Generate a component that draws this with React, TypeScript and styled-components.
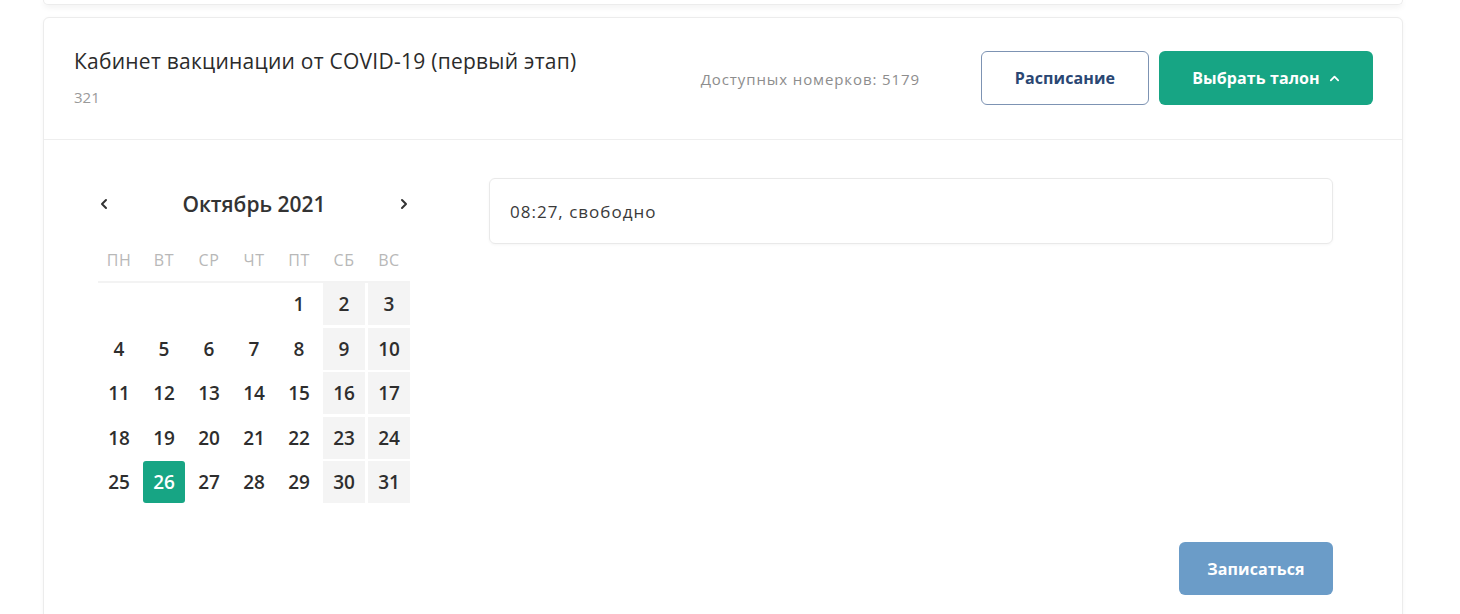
import React from "react";
import styled, { createGlobalStyle } from "styled-components";

const GlobalStyle = createGlobalStyle`
  html, body {
    margin: 0;
    padding: 0;
    background: #ffffff;
    font-family: "Open Sans", "Noto Sans", sans-serif;
    color: #333;
  }
  * { box-sizing: border-box; }
`;

// --- page ---
const Page = styled.div`
  width: 1460px;
  height: 614px;
  overflow: hidden;
  padding: 0 57px 0 43px;
`;

const PrevCard = styled.div`
  height: 5px;
  background: #fff;
  border: 1px solid #ececec;
  border-top: none;
  border-radius: 0 0 6px 6px;
  box-shadow: 0 2px 6px rgba(0, 0, 0, 0.07);
  margin-bottom: 12px;
`;

const Card = styled.section`
  border: 1px solid #ececec;
  border-radius: 6px;
  background: #fff;
  box-shadow: 0 1px 4px rgba(0, 0, 0, 0.04);
`;

// --- header ---
const Header = styled.header`
  height: 122px;
  display: flex;
  align-items: center;
  padding: 0 29px 0 30px;
  border-bottom: 1px solid #eeeeee;
`;

const TitleBlock = styled.div`
  flex: 1;
  display: flex;
  flex-direction: column;
  gap: 14px;
  margin-top: -4px;
`;

const Title = styled.h2`
  margin: 0;
  font-size: 21px;
  font-weight: 400;
  color: #2b2b2b;
  line-height: 26px;
  letter-spacing: 0.25px;
`;

const Sub = styled.span`
  font-size: 15px;
  color: #9a9a9a;
  line-height: 18px;
`;

const Counter = styled.span`
  font-size: 15px;
  color: #8d8d8d;
  letter-spacing: 0.9px;
  margin-right: 61px;
  margin-top: 0;
`;

const Button = styled.button<{ $variant: "outline" | "green" | "blue" }>`
  height: 54px;
  border-radius: 6px;
  font-family: inherit;
  font-size: 16px;
  font-weight: 700;
  letter-spacing: 0.1px;
  display: inline-flex;
  align-items: center;
  justify-content: center;
  gap: 9px;
  cursor: pointer;
  border: ${(p) => (p.$variant === "outline" ? "1.5px solid #7d93b3" : "none")};
  background: ${(p) =>
    p.$variant === "outline" ? "#fff" : p.$variant === "green" ? "#17a584" : "#6b9cc8"};
  color: ${(p) => (p.$variant === "outline" ? "#2a4773" : "#fff")};
`;

const Buttons = styled.div`
  display: flex;
  gap: 10px;
  margin-top: -1px;
`;

// --- body ---
const Body = styled.div`
  display: flex;
  padding: 38px 69px 25px 54px;
  gap: 79px;
  height: 480px;
`;

const Calendar = styled.div`
  width: 312px;
  flex-shrink: 0;
`;

const MonthBar = styled.div`
  height: 52px;
  display: flex;
  align-items: center;
  justify-content: space-between;
`;

const NavBtn = styled.span<{ $side: "left" | "right" }>`
  width: 16px;
  display: flex;
  justify-content: ${(p) => (p.$side === "left" ? "flex-start" : "flex-end")};
  align-items: center;
`;

const Month = styled.span`
  font-size: 21px;
  font-weight: 600;
  color: #333;
`;

const WeekRow = styled.div`
  display: grid;
  grid-template-columns: repeat(7, 42px);
  column-gap: 3px;
  height: 44px;
  align-items: center;
  border-bottom: 2px solid #f3f3f3;
  margin-top: 9px;
`;

const WeekDay = styled.span`
  text-align: center;
  font-size: 16px;
  letter-spacing: 0.6px;
  color: #b8b8b8;
`;

const Days = styled.div`
  display: grid;
  grid-template-columns: repeat(7, 42px);
  grid-auto-rows: 42px;
  gap: 2.5px 3px;
`;

const Day = styled.span<{ $weekend?: boolean; $selected?: boolean }>`
  display: flex;
  align-items: center;
  justify-content: center;
  font-size: 19px;
  font-weight: 600;
  border-radius: ${(p) => (p.$selected ? "3px" : "0")};
  color: ${(p) => (p.$selected ? "#fff" : "#2e2e2e")};
  background: ${(p) => (p.$selected ? "#17a584" : p.$weekend ? "#f4f4f4" : "transparent")};
`;

const Slots = styled.div`
  flex: 1;
  display: flex;
  flex-direction: column;
`;

const Slot = styled.div`
  height: 66px;
  border: 1px solid #e9e9e9;
  border-radius: 6px;
  box-shadow: 0 1px 3px rgba(0, 0, 0, 0.04);
  display: flex;
  align-items: center;
  padding: 0 20px;
  font-size: 17px;
  letter-spacing: 1px;
  color: #3a3a3a;
`;

const Footer = styled.div`
  margin-top: auto;
  display: flex;
  justify-content: flex-end;
`;

const Chevron = ({ dir, color = "#333", size = 12 }: { dir: "left" | "right" | "up"; color?: string; size?: number }) => {
  const d = dir === "left" ? "M8 2 L4 6 L8 10" : dir === "right" ? "M4 2 L8 6 L4 10" : "M2 8 L6 4 L10 8";
  return (
    <svg width={size} height={size} viewBox="0 0 12 12" fill="none">
      <path d={d} stroke={color} strokeWidth="2" strokeLinecap="round" strokeLinejoin="round" />
    </svg>
  );
};

const weekDays = ["ПН", "ВТ", "СР", "ЧТ", "ПТ", "СБ", "ВС"];

export default function App() {
  const cells: (number | null)[] = [null, null, null, null];
  for (let i = 1; i <= 31; i++) cells.push(i);

  return (
    <Page>
      <GlobalStyle />
      <PrevCard />
      <Card>
        <Header>
          <TitleBlock>
            <Title>Кабинет вакцинации от COVID-19 (первый этап)</Title>
            <Sub>321</Sub>
          </TitleBlock>
          <Counter>Доступных номерков: 5179</Counter>
          <Buttons>
            <Button $variant="outline" style={{ width: 168 }}>Расписание</Button>
            <Button $variant="green" style={{ width: 214 }}>
              Выбрать талон <Chevron dir="up" color="#fff" size={11} />
            </Button>
          </Buttons>
        </Header>
        <Body>
          <Calendar>
            <MonthBar>
              <NavBtn $side="left"><Chevron dir="left" /></NavBtn>
              <Month>Октябрь 2021</Month>
              <NavBtn $side="right"><Chevron dir="right" /></NavBtn>
            </MonthBar>
            <WeekRow>
              {weekDays.map((w) => (
                <WeekDay key={w}>{w}</WeekDay>
              ))}
            </WeekRow>
            <Days>
              {cells.map((c, i) =>
                c === null ? (
                  <span key={i} />
                ) : (
                  <Day key={i} $weekend={i % 7 >= 5} $selected={c === 26}>
                    {c}
                  </Day>
                )
              )}
            </Days>
          </Calendar>
          <Slots>
            <Slot>08:27, свободно</Slot>
            <Footer>
              <Button $variant="blue" style={{ width: 154, height: 53 }}>Записаться</Button>
            </Footer>
          </Slots>
        </Body>
      </Card>
    </Page>
  );
}
